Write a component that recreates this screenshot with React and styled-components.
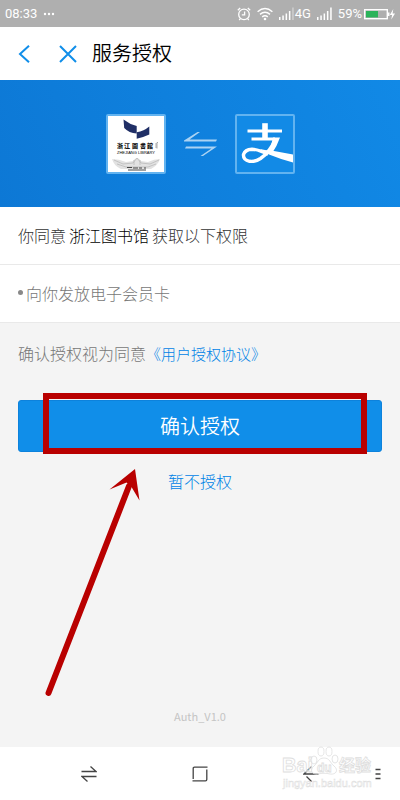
import React from "react";
import styled, { createGlobalStyle, css } from "styled-components";

const blue = "#108ee9";
const red = "#b90000";

const GlobalStyle = createGlobalStyle`
  * {
    box-sizing: border-box;
  }

  body {
    margin: 0;
    background: #f4f4f4;
    font-family: "Noto Sans CJK SC", "Noto Sans", sans-serif;
    font-size: 16px;
    line-height: 24px;
    font-weight: 300;
  }
`;

const Page = styled.div`
  min-height: 100vh;
  display: flex;
  flex-direction: column;
`;

const StatusBar = styled.div`
  display: flex;
  justify-content: space-between;
  align-items: center;
  height: 27px;
  padding: 0 5px;
  background: #afafaf;
  color: #fff;
  font-family: Roboto, sans-serif;
  font-size: 13px;
  font-weight: 400;
`;

const StatusGroup = styled.div`
  display: flex;
  align-items: center;
  gap: ${({ gap }) => gap}px;

  svg {
    display: block;
  }
`;

const TitleBar = styled.header`
  display: flex;
  align-items: center;
  height: 53px;
  padding: 0 12px;
  background: #fff;
`;

const Title = styled.h1`
  margin: 0;
  padding: 0 0 2px 12px;
  font-size: 20px;
  font-weight: 350;
  color: #000;
`;

const IconButton = styled.button`
  display: flex;
  justify-content: center;
  align-items: center;
  width: 24px;
  height: 32px;
  margin: 0;
  padding: 0;
  border: 0;
  background: none;
  color: ${({ tone }) => tone || blue};
`;

const CloseButton = styled(IconButton)`
  margin-left: 20px;
`;

const Banner = styled.section`
  display: flex;
  justify-content: center;
  align-items: center;
  gap: 17px;
  height: 127px;
  background: linear-gradient(65deg, #0d78d5, #1189e6);
`;

const LogoBox = styled.div`
  width: 60px;
  height: 60px;
  border: 2px solid #62b3f0;
  border-radius: 2px;
  background: ${({ fill }) => fill};

  svg {
    display: block;
  }
`;

const Row = styled.div`
  display: flex;
  align-items: center;
  gap: 3px;
  height: 58px;
  padding: 0 18px 2px;
  background: #fff;
  border-bottom: 1px solid #e9e9e9;
  color: ${({ tone }) => tone};
`;

const Strong = styled.span`
  color: #000;
`;

const Bullet = styled.span`
  width: 5px;
  height: 5px;
  border-radius: 50%;
  background: #888;
`;

const Actions = styled.main`
  position: relative;
  flex: 1;
  display: flex;
  flex-direction: column;
  align-items: stretch;
  padding: 18px 18px 16px;
`;

const Terms = styled.p`
  margin: 0;
  color: #777;
`;

const Link = styled.a`
  color: #0083e6;
  font-size: 15px;
  text-decoration: none;
`;

const ConfirmArea = styled.div`
  position: relative;
  margin: 34px 0 17px;
`;

const ConfirmButton = styled.button`
  display: block;
  width: 100%;
  height: 52px;
  border: 1px solid #0d82dc;
  border-radius: 3px;
  background: ${blue};
  color: #fff;
  font: inherit;
  font-size: 20px;
  font-weight: 350;
`;

const Highlight = styled.div`
  position: absolute;
  top: -7px;
  bottom: -2px;
  left: 25px;
  right: 15px;
  border: 6px solid ${red};
  pointer-events: none;
`;

const CancelButton = styled.button`
  align-self: center;
  padding: 0;
  border: 0;
  background: none;
  color: #0083e6;
  font: inherit;
`;

const Pointer = styled.svg`
  position: absolute;
  top: 145px;
  left: 40px;
  pointer-events: none;
`;

const Version = styled.footer`
  margin-top: auto;
  padding-bottom: 3px;
  text-align: center;
  font-size: 11px;
  font-weight: 400;
  color: #c4c4c4;
`;

const NavBar = styled.nav`
  position: relative;
  display: grid;
  grid-template-columns: repeat(3, 1fr) 34px;
  align-items: center;
  height: 53px;
  padding-left: 34px;
  background: #fff;

  ${IconButton} {
    justify-self: center;
  }

  ${IconButton}:nth-of-type(4) {
    justify-self: start;
  }
`;

const Watermark = styled.div`
  position: absolute;
  right: 28px;
  bottom: 8px;
  pointer-events: none;

  svg {
    display: block;
  }
`;

const strokeStyles = css`
  fill: none;
  stroke: currentColor;
`;

const LineIcon = styled.svg`
  ${strokeStyles}
`;

const Alarm = () => (
  <LineIcon width="14" height="14" viewBox="0 0 14 14" strokeWidth="1.3">
    <circle cx="7" cy="7.4" r="5.3" />
    <path d="M7.6 4.4V7.8H4.8M.8 3.2 3.2 1M13.2 3.2 10.8 1M3.4 11.6 2.2 13M10.6 11.6 11.8 13" />
  </LineIcon>
);

const Wifi = () => (
  <LineIcon width="16" height="14" viewBox="0 0 16 14" strokeWidth="1.4">
    <path d="M.6 4.8Q8-1.6 15.4 4.8M3 7.4Q8 3.2 13 7.4M5.2 9.9Q8 7.6 10.8 9.9" />
    <circle cx="8" cy="12" r="1.3" fill="currentColor" stroke="none" />
  </LineIcon>
);

const Signal = ({ weak }) => (
  <svg width="15" height="14" viewBox="0 0 15 14" fill="#fff">
    <path d="M0 10h1.5v3H0zM3.3 8.5h1.5v4.5H3.3zM6.6 6.5h1.5v6.5H6.6zM9.9 4h1.5v9H9.9z" />
    <path d="M13.2 .5h1.5v12.5h-1.5z" opacity={weak ? 0.4 : 1} />
  </svg>
);

const Battery = () => (
  <svg width="31" height="12" viewBox="0 0 31 12">
    <rect x=".7" y="1.7" width="22.6" height="9" fill="none" stroke="#fff" strokeWidth="1.4" />
    <rect x="2" y="3" width="12" height="6.4" fill="#2cb35a" />
    <rect x="24" y="4.5" width="1.5" height="3.5" fill="#fff" />
    <path d="M29.3 1 25.8 7h2.3l-.8 4.5L31 5.4h-2.4z" fill="#fff" />
  </svg>
);

const LibraryLogo = () => (
  <svg width="56" height="56" viewBox="0 0 56 56">
    <path d="M15.5 3.5Q22 8.500 28.7 10V17.5Q21 17 16.2 12z" fill="#202f66" />
    <path d="M28.7 16.2Q36 15 41.3 10.5V18.5Q35 21.5 28.7 22.7z" fill="#202f66" />
    <text y="32" fontSize="6" fontWeight="900" fontFamily="Noto Sans CJK TC, sans-serif" fill="#151515">
      <tspan x="9">浙</tspan>
      <tspan x="16">江</tspan>
      <tspan x="24">圖</tspan>
      <tspan x="32">書</tspan>
      <tspan x="39">館</tspan>
    </text>
    <path d="M48 27v5M50 26.5h-1v6" stroke="#777" strokeWidth=".6" fill="none" />
    <text x="28" y="38" textAnchor="middle" fontSize="4" fontWeight="400" fontFamily="Liberation Sans, sans-serif" fill="#000">
      ZHEJIANG LIBRARY
    </text>
    <path d="M4 43q7 0 14 3l7-1q4-6 8 0l7 1q6-3 12-3-2 6-9 10H13Q6 50 4 43z" fill="#e2e2e2" />
    <path d="M6 44l9 4 10-1 4-5 4 5 9 1 9-4M9 48l9 3h22l8-3M26 44v5M32 44v5" stroke="#b5b5b5" strokeWidth=".7" fill="none" />
    <path d="M19 51.5h5M25 52h5M31 52h3M36 52h2M20 54h18" stroke="#444" strokeWidth="1.2" fill="none" />
  </svg>
);

const AlipayLogo = () => (
  <svg width="56" height="56" viewBox="0 0 56 56" fill="none" stroke="#fff">
    <path d="M10.5 15H45" strokeWidth="3" />
    <path d="M28 7.2V23" strokeWidth="5.6" />
    <path d="M14.5 23H38" strokeWidth="3" />
    <path d="M38 24Q33 36 23.5 42.5 18 46 12.5 45.3 6 44 6.5 38.5 8 33.5 15 33.2 22 33.5 31 38.5" strokeWidth="3.4" />
    <path d="M23 33Q34 35 37 35L56 38.5V46.5Q43 43 32 38.5 27 36 23 33z" fill="#fff" stroke="none" />
    <path d="M36 21.5h7Q40 30 35.5 36.5L29 39Q34 32 36 21.5z" fill="#fff" stroke="none" />
  </svg>
);

const Exchange = () => (
  <svg width="35" height="26" viewBox="0 0 35 26" fill="#fff" opacity=".65">
    <path d="M1 9.5 14.5 1H17L6.5 8.5H34L33 10.5H1z" />
    <path d="M34 15.5 20 25H17.5L28.5 17.5H2L3 15.5z" />
  </svg>
);

const Baidu = () => (
  <svg width="92" height="46" viewBox="0 0 92 46" fill="#fff" fillOpacity=".5" stroke="#dedede" strokeWidth=".8">
    <text x="2" y="26" fontSize="20" fontWeight="700" fontFamily="Liberation Sans, sans-serif">Bai</text>
    <path d="M44 12c6 0 6 5 10 8 5 4 2 9-4 8-4-1-8-1-12 0-6 1-9-4-4-8 4-3 4-8 10-8z" />
    <ellipse cx="34" cy="14" rx="3" ry="4" />
    <ellipse cx="41" cy="5.5" rx="3" ry="4.5" />
    <ellipse cx="49" cy="5.5" rx="3" ry="4.5" />
    <ellipse cx="55" cy="13" rx="3" ry="4" />
    <text x="37" y="26" fontSize="12" fontWeight="700" fontFamily="Liberation Sans, sans-serif">du</text>
    <text x="59" y="25" fontSize="16" fontWeight="700">经验</text>
    <text x="3" y="41" fontSize="11" strokeWidth=".5" fontFamily="Liberation Sans, sans-serif">jingyan.baidu.com</text>
  </svg>
);

export default function App() {
  return (
    <Page>
      <GlobalStyle />
      <StatusBar>
        <StatusGroup gap={6}>
          <span>08:33</span>
          <svg width="12" height="4" viewBox="0 0 12 4" fill="#fff">
            <circle cx="2" cy="2" r="1.2" />
            <circle cx="6" cy="2" r="1.2" />
            <circle cx="10" cy="2" r="1.2" />
          </svg>
        </StatusGroup>
        <StatusGroup gap={6}>
          <Alarm />
          <Wifi />
          <StatusGroup gap={1}>
            <Signal weak />
            <span>4G</span>
          </StatusGroup>
          <Signal />
          <StatusGroup gap={2}>
            <span>59%</span>
            <Battery />
          </StatusGroup>
        </StatusGroup>
      </StatusBar>

      <TitleBar>
        <IconButton aria-label="返回">
          <LineIcon width="12" height="18" viewBox="0 0 12 18" strokeWidth="2">
            <path d="M11 .8 2 9 11 17.2" />
          </LineIcon>
        </IconButton>
        <CloseButton aria-label="关闭">
          <LineIcon width="18" height="18" viewBox="0 0 18 18" strokeWidth="2">
            <path d="M1 1 17 17M17 1 1 17" />
          </LineIcon>
        </CloseButton>
        <Title>服务授权</Title>
      </TitleBar>

      <Banner>
        <LogoBox fill="#fff"><LibraryLogo /></LogoBox>
        <Exchange />
        <LogoBox fill="#128ae6"><AlipayLogo /></LogoBox>
      </Banner>

      <Row tone="#333">
        <span>你同意</span>
        <Strong>浙江图书馆</Strong>
        <span>获取以下权限</span>
      </Row>
      <Row tone="#777">
        <Bullet />
        <span>向你发放电子会员卡</span>
      </Row>

      <Actions>
        <Terms>
          确认授权视为同意<Link href="#agreement">《用户授权协议》</Link>
        </Terms>
        <ConfirmArea>
          <ConfirmButton>确认授权</ConfirmButton>
          <Highlight />
        </ConfirmArea>
        <CancelButton>暂不授权</CancelButton>
        <Pointer width="104" height="232" viewBox="0 0 104 232">
          <path d="M8.5 225 89 18" stroke={red} strokeWidth="6" strokeLinecap="round" />
          <path d="M95 1 69.5 21.5 86.5 14.5 91.5 19 99.5 32.5z" fill={red} />
        </Pointer>
        <Version>Auth_V1.0</Version>
      </Actions>

      <NavBar>
        <IconButton tone="#444" aria-label="切换">
          <LineIcon width="16" height="16" viewBox="0 0 16 16" strokeWidth="1.3">
            <path d="M.5 5.5H15L9.5 .5M15.5 10.5H1L6.5 15.5" />
          </LineIcon>
        </IconButton>
        <IconButton tone="#444" aria-label="主页">
          <LineIcon width="16" height="16" viewBox="0 0 16 16" strokeWidth="1.3">
            <path d="M15.5 1.2H2.5Q1.2 1.2 1.2 2.5V13M.5 14.8H13.5Q14.8 14.8 14.8 13.5V3.5" />
          </LineIcon>
        </IconButton>
        <IconButton tone="#444" aria-label="后退">
          <LineIcon width="16" height="16" viewBox="0 0 16 16" strokeWidth="1.3">
            <path d="M8.5 .5 1 8H15.5M3.5 10.5 8.5 15.5" />
          </LineIcon>
        </IconButton>
        <IconButton tone="#444" aria-label="菜单">
          <LineIcon width="6" height="12" viewBox="0 0 6 12" strokeWidth="1.4">
            <path d="M.5 1.5H5.5M.5 6H5.5M.5 10.5H5.5" />
          </LineIcon>
        </IconButton>
        <Watermark><Baidu /></Watermark>
      </NavBar>
    </Page>
  );
}
